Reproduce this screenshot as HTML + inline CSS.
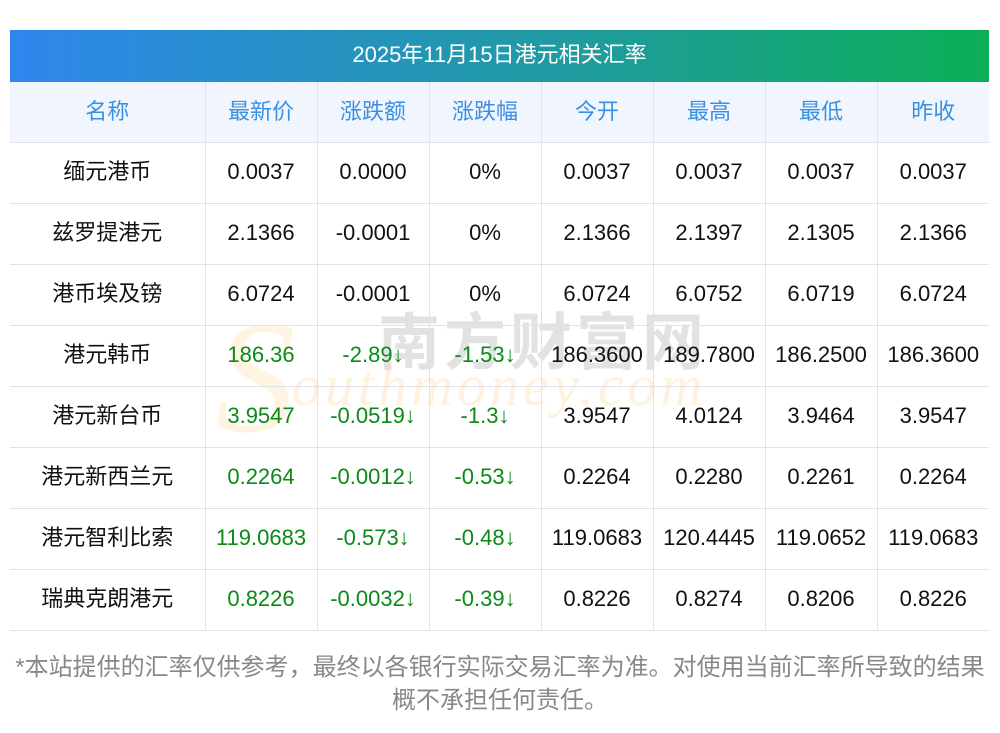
<!DOCTYPE html>
<html><head><meta charset="utf-8"><style>
body{margin:0;width:1000px;height:733px;background:#fff;font-family:"Liberation Sans","Noto Sans CJK SC",sans-serif;position:relative;overflow:hidden}
.title{position:absolute;left:10px;top:30px;width:979px;height:52px;background:linear-gradient(90deg,#2f87ee,#1f9c9c 60%,#0bae55);color:#fff;font-size:22px;line-height:49px;text-align:center}
table{position:absolute;left:10px;top:82px;border-collapse:collapse;table-layout:fixed;width:979px}
td{height:57px;border:1px solid #e0e2ea;text-align:center;font-size:22px;line-height:24px;color:#111;padding:0 0 3px 0;white-space:nowrap;vertical-align:middle}
tr:first-child td{border-top:none;background:#f1f6fe;color:#3a90e0;padding:0;height:60px}
td:first-child{border-left:none}td:last-child{border-right:none}
.g{color:#0a8a16}
.note{position:absolute;left:0;width:1000px;top:651px;text-align:center;color:#888;font-size:24px;line-height:33px}
.wm{position:absolute;left:378px;top:292px;font-size:62px;color:rgba(150,150,150,.28);letter-spacing:4px;font-weight:bold}
.wm2{position:absolute;left:292px;top:352px;font-size:58px;color:rgba(255,200,120,.25);font-family:"Liberation Serif",serif;font-style:italic;letter-spacing:4px}
.wmS{position:absolute;left:215px;top:285px;font-size:160px;color:rgba(255,200,120,.22);font-family:"Liberation Serif",serif;font-style:italic}
</style></head><body>
<div class="title">2025年11月15日港元相关汇率</div>
<div class="wmS">S</div>
<div class="wm">南方财富网</div>
<div class="wm2">outhmoney.com</div>
<table>
<colgroup><col style="width:195px"><col style="width:112px"><col style="width:112px"><col style="width:112px"><col style="width:112px"><col style="width:112px"><col style="width:112px"><col style="width:112px"></colgroup>
<tr><td>名称</td><td>最新价</td><td>涨跌额</td><td>涨跌幅</td><td>今开</td><td>最高</td><td>最低</td><td>昨收</td></tr>
<tr><td>缅元港币</td><td>0.0037</td><td>0.0000</td><td>0%</td><td>0.0037</td><td>0.0037</td><td>0.0037</td><td>0.0037</td></tr>
<tr><td>兹罗提港元</td><td>2.1366</td><td>-0.0001</td><td>0%</td><td>2.1366</td><td>2.1397</td><td>2.1305</td><td>2.1366</td></tr>
<tr><td>港币埃及镑</td><td>6.0724</td><td>-0.0001</td><td>0%</td><td>6.0724</td><td>6.0752</td><td>6.0719</td><td>6.0724</td></tr>
<tr><td>港元韩币</td><td class="g">186.36</td><td class="g">-2.89↓</td><td class="g">-1.53↓</td><td>186.3600</td><td>189.7800</td><td>186.2500</td><td>186.3600</td></tr>
<tr><td>港元新台币</td><td class="g">3.9547</td><td class="g">-0.0519↓</td><td class="g">-1.3↓</td><td>3.9547</td><td>4.0124</td><td>3.9464</td><td>3.9547</td></tr>
<tr><td>港元新西兰元</td><td class="g">0.2264</td><td class="g">-0.0012↓</td><td class="g">-0.53↓</td><td>0.2264</td><td>0.2280</td><td>0.2261</td><td>0.2264</td></tr>
<tr><td>港元智利比索</td><td class="g">119.0683</td><td class="g">-0.573↓</td><td class="g">-0.48↓</td><td>119.0683</td><td>120.4445</td><td>119.0652</td><td>119.0683</td></tr>
<tr><td>瑞典克朗港元</td><td class="g">0.8226</td><td class="g">-0.0032↓</td><td class="g">-0.39↓</td><td>0.8226</td><td>0.8274</td><td>0.8206</td><td>0.8226</td></tr>
</table>
<div class="note">*本站提供的汇率仅供参考，最终以各银行实际交易汇率为准。对使用当前汇率所导致的结果<br>概不承担任何责任。</div>
</body></html>
